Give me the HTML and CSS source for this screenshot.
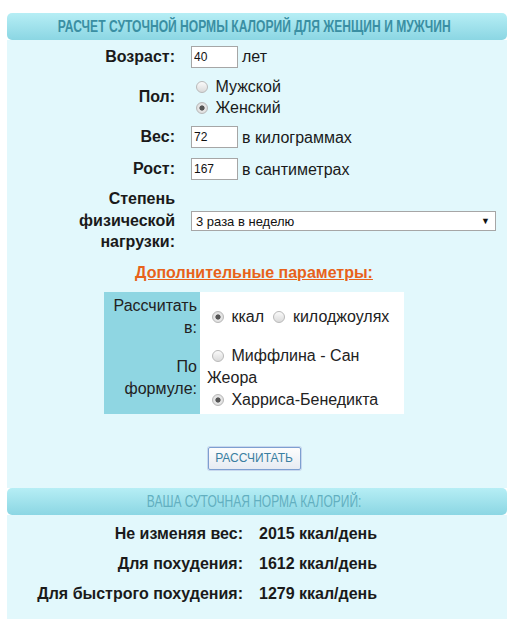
FILE: index.html
```html
<html>

<head>
    <meta charset="utf-8">
    <link rel="stylesheet" href="styles.css">
</head>

<body>
    <div class="calc">
        <div class="calc-head"><span class="head-text">Расчет суточной нормы калорий для женщин и мужчин</span></div>
        <div class="calc-body">
            <div class="form-grid">
                <div class="lbl">Возраст:</div>
                <div class="ctl row-age"><input class="num" type="text" value="40"> лет</div>

                <div class="lbl">Пол:</div>
                <div class="ctl row-sex">
                    <label><input type="radio" name="sex"> Мужской</label><br>
                    <label><input type="radio" name="sex" checked> Женский</label>
                </div>

                <div class="lbl">Вес:</div>
                <div class="ctl row-w"><input class="num" type="text" value="72"> в килограммах</div>

                <div class="lbl">Рост:</div>
                <div class="ctl row-h"><input class="num" type="text" value="167"> в сантиметрах</div>

                <div class="lbl lbl-multi">Степень физической нагрузки:</div>
                <div class="ctl">
                    <div class="select-wrap">
                        <select class="activity">
                            <option>3 раза в неделю</option>
                        </select>
                        <span class="arrow">&#9660;</span>
                    </div>
                </div>
            </div>

            <div class="extra"><a href="#">Дополнительные параметры:</a></div>

            <table class="opts">
                <tr>
                    <td class="opt-lbl">Рассчитать в:</td>
                    <td class="opt-val">
                        <label><input type="radio" name="unit" checked> ккал</label>
                        <label><input type="radio" name="unit"> килоджоулях</label>
                    </td>
                </tr>
                <tr>
                    <td class="opt-lbl">По формуле:</td>
                    <td class="opt-val">
                        <label><input type="radio" name="formula"> Миффлина - Сан Жеора</label><br>
                        <label><input type="radio" name="formula" checked> Харриса-Бенедикта</label>
                    </td>
                </tr>
            </table>

            <div class="btn-row"><button class="calc-btn">Рассчитать</button></div>
        </div>

        <div class="calc-head result-head"><span class="head-text">Ваша суточная норма калорий:</span></div>
        <div class="result">
            <div class="res-lbl">Не изменяя вес:</div>
            <div class="res-val">2015 ккал/день</div>
            <div class="res-lbl">Для похудения:</div>
            <div class="res-val">1612 ккал/день</div>
            <div class="res-lbl">Для быстрого похудения:</div>
            <div class="res-val">1279 ккал/день</div>
        </div>
    </div>
</body>

</html>
```

FILE: styles.css
```css
body {
    margin: 0;
    background: #fff;
    font-family: "Liberation Sans", Arial, sans-serif;
    font-size: 16px;
    color: #1a1a1a;
}

.calc {
    width: 500px;
    margin: 13px 0 0 7px;
}

.calc-head {
    display: flex;
    justify-content: center;
    height: 27px;
    line-height: 27px;
    padding-right: 6px;
    white-space: nowrap;
    font-family: "Liberation Sans", Arial, sans-serif;
    font-size: 16px;
    font-weight: bold;
    color: #3a8fa3;
    background: linear-gradient(#b6eef5, #8bd6e3);
    border-radius: 5px;
}

/* заголовок узкий — сжимаем текст по горизонтали */
.head-text {
    flex: none;
    text-transform: uppercase;
    transform: scaleX(0.755);
}

.result-head {
    font-weight: normal;
    color: #62afc0;
}

.result-head .head-text {
    transform: scaleX(0.75);
}

.calc-body {
    background: #e2f8fc;
    padding: 3px 6px 18px 0;
}

.form-grid {
    display: grid;
    grid-template-columns: 100px 1fr;
    column-gap: 16px;
    row-gap: 6px;
    padding-left: 68px;
    align-items: center;
}

.lbl {
    font-weight: bold;
    text-align: right;
}

.lbl-multi {
    line-height: 21.5px;
}

.ctl {
    line-height: 21px;
}

.row-age {
    height: 27px;
    display: flex;
    align-items: center;
}

.row-w,
.row-h {
    height: 26px;
    display: flex;
    align-items: center;
}

.row-age .num,
.row-w .num,
.row-h .num {
    margin-right: 4px;
}

.num {
    width: 47px;
    height: 22px;
    box-sizing: border-box;
    padding: 1px 2px;
    border: 1px solid #a6a6a6;
    font-family: "Liberation Sans", sans-serif;
    font-size: 12px;
    color: #111;
    background: #fff;
}

input[type="radio"] {
    appearance: none;
    -webkit-appearance: none;
    width: 12px;
    height: 12px;
    margin: 3px 3px 0 5px;
    border: 1px solid #b9b9b9;
    border-radius: 50%;
    background: linear-gradient(#fafafa, #dadada);
    vertical-align: -1px;
}

input[type="radio"]:checked {
    background: radial-gradient(circle, #555 0, #555 2.2px, #e9e9e9 3px, #d8d8d8 6px);
}

.select-wrap {
    position: relative;
    width: 305px;
    margin-top: 2px;
}

.activity {
    appearance: none;
    -webkit-appearance: none;
    width: 305px;
    height: 20px;
    padding: 0 0 0 4px;
    border: 1px solid #a6a6a6;
    border-radius: 0;
    background: #fff;
    font-family: "Liberation Sans", Arial, sans-serif;
    font-size: 13px;
    color: #111;
}

.arrow {
    position: absolute;
    right: 6px;
    top: 0;
    line-height: 20px;
    font-size: 9px;
    color: #111;
    pointer-events: none;
}

.extra {
    margin-top: 10px;
    line-height: 20px;
    text-align: center;
}

.extra a {
    color: #e8621a;
    font-weight: bold;
}

.opts {
    margin: 9px auto 0;
    width: 300px;
    border-collapse: collapse;
    background: #fff;
}

.opts td {
    line-height: 22px;
    padding: 3px 0;
}

.opt-lbl {
    width: 96px;
    padding-right: 3px !important;
    box-sizing: border-box;
    text-align: right;
    background: #8fd6e2;
    color: #222;
}

.opt-val {
    padding-left: 7px !important;
    vertical-align: middle;
    color: #222;
}

.btn-row {
    margin-top: 33px;
    text-align: center;
}

.calc-btn {
    width: 93px;
    height: 23px;
    padding: 0;
    border: 1px solid #7d9fd0;
    border-radius: 2px;
    background: linear-gradient(#fdfdfd, #e6ebf2);
    font-family: "Liberation Sans", Arial, sans-serif;
    font-size: 12px;
    text-transform: uppercase;
    color: #3a7fa1;
    box-shadow: 0 0 0 1px #c8d8ee;
}

.result {
    display: grid;
    grid-template-columns: 236px 1fr;
    column-gap: 16px;
    padding: 4px 0 12px;
    background: #e2f8fc;
    font-weight: bold;
    line-height: 30px;
}

.res-lbl {
    text-align: right;
}
```
